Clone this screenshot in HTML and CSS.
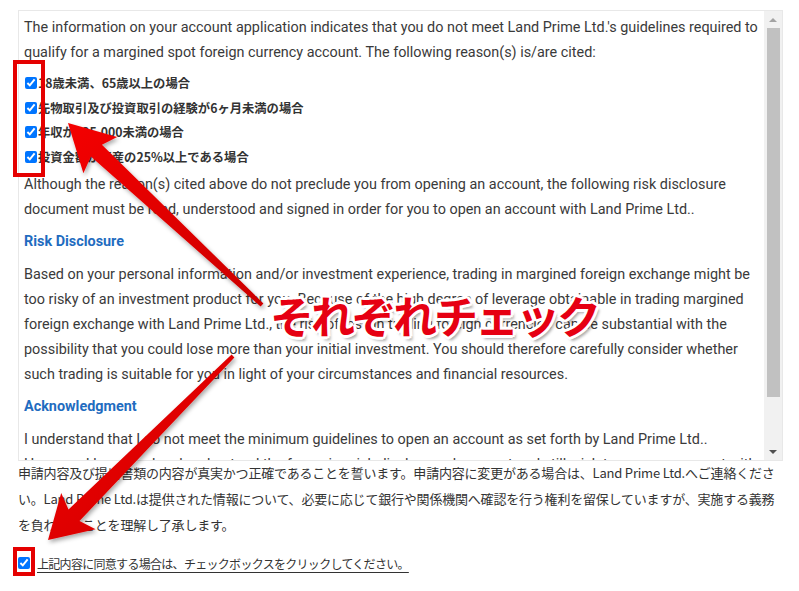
FILE: index.html
```html
<!DOCTYPE html>
<html lang="ja">
<head>
<meta charset="utf-8">
<title>Risk Disclosure</title>
<link rel="stylesheet" href="styles.css">
</head>
<body>
<div class="box">
  <div class="content">
    <p class="para">The information on your account application indicates that you do not meet Land Prime Ltd.'s guidelines required to qualify for a margined spot foreign currency account. The following reason(s) is/are cited:</p>
    <ul class="reasons">
      <li><input type="checkbox" checked><span>18歳未満、65歳以上の場合</span></li>
      <li><input type="checkbox" checked><span>先物取引及び投資取引の経験が6ヶ月未満の場合</span></li>
      <li><input type="checkbox" checked><span>年収が$25,000未満の場合</span></li>
      <li><input type="checkbox" checked><span>投資金額が資産の25%以上である場合</span></li>
    </ul>
    <p class="para tight">Although the reason(s) cited above do not preclude you from opening an account, the following risk disclosure document must be read, understood and signed in order for you to open an account with Land Prime Ltd..</p>
    <h3 class="head">Risk Disclosure</h3>
    <p class="para">Based on your personal information and/or investment experience, trading in margined foreign exchange might be too risky of an investment product for you. Because of the high degree of leverage obtainable in trading margined foreign exchange with Land Prime Ltd., the risk of loss in trading foreign currencies can be substantial with the possibility that you could lose more than your initial investment. You should therefore carefully consider whether such trading is suitable for you in light of your circumstances and financial resources.</p>
    <h3 class="head">Acknowledgment</h3>
    <p class="para">I understand that I do not meet the minimum guidelines to open an account as set forth by Land Prime Ltd.. However, I have read and understood the foregoing risk disclosure document and still wish to open an account with Land Prime Ltd..</p>
  </div>
  <div class="scrollbar">
    <div class="sb-btn"><span class="tri up"></span></div>
    <div class="sb-thumb"></div>
    <div class="sb-space"></div>
    <div class="sb-btn"><span class="tri down"></span></div>
  </div>
</div>
<p class="notice">申請内容及び提出書類の内容が真実かつ正確であることを誓います。申請内容に変更がある場合は、Land Prime Ltd.へご連絡ください。Land Prime Ltd.は提供された情報について、必要に応じて銀行や関係機関へ確認を行う権利を留保していますが、実施する義務を負わないことを理解し了承します。</p>
<label class="agree"><input type="checkbox" checked><span>上記内容に同意する場合は、チェックボックスをクリックしてください。</span></label>

<div class="annot">
  <div class="frame frame-list"></div>
  <div class="frame frame-agree"></div>
  <svg class="arrows" width="799" height="591" viewBox="0 0 799 591">
    <defs>
      <linearGradient id="rg" x1="0" y1="0" x2="1" y2="1">
        <stop offset="0" stop-color="#f40000"/>
        <stop offset="1" stop-color="#cc0000"/>
      </linearGradient>
      <filter id="sh" x="-20%" y="-20%" width="140%" height="140%">
        <feDropShadow dx="1.5" dy="2.5" stdDeviation="2" flood-color="#000" flood-opacity="0.35"/>
      </filter>
    </defs>
    <path filter="url(#sh)" fill="url(#rg)" d="M68,123 L117.2,137.1 L101.9,144.7 L263.4,303.5 L260.6,306.5 L90.9,156.5 L83.4,173.3 Z"/>
    <path filter="url(#sh)" fill="url(#rg)" d="M48,540 L95.6,529.2 L79.5,521 L234.4,357.4 L231.6,354.6 L68.5,509.4 L61.2,493 Z"/>
  </svg>
  <div class="callout">それぞれチェック</div>
</div>
</body>
</html>
```
FILE: styles.css
```css
html, body {
  margin: 0;
  padding: 0;
  background: #fff;
}
body {
  padding: 10px 16px 0 18px;
  font-family: Roboto, "Noto Sans CJK JP", sans-serif;
  color: #3a3a3a;
  position: relative;
  width: 799px;
  height: 591px;
  box-sizing: border-box;
  overflow: hidden;
}
.box {
  display: flex;
  width: 765px;
  height: 451px;
  border: 1px solid #e8e8e8;
  box-sizing: border-box;
}
.content {
  flex: 1;
  overflow: hidden;
  padding: 4px 6px 0 5px;
}
.para {
  margin: 0;
  font-size: 14.4px;
  line-height: 25px;
}
.reasons {
  list-style: none;
  margin: 6px 0 0;
  padding: 0;
}
.reasons li {
  display: flex;
  align-items: center;
  height: 24.5px;
  font-family: "Noto Sans CJK JP", sans-serif;
  font-weight: 700;
  font-size: 12.3px;
  color: #333;
}
.reasons input {
  width: 12px;
  height: 12px;
  margin: 0 1px 0 1px;
}
.tight {
  margin-top: 3px;
}
.head {
  margin: 10px 0;
  font-size: 14.4px;
  line-height: 20px;
  font-weight: 700;
  color: #1f6cc0;
}
.scrollbar {
  width: 18px;
  background: #f1f1f1;
  display: flex;
  flex-direction: column;
  align-items: center;
}
.sb-btn {
  height: 17px;
  width: 100%;
  display: flex;
  align-items: center;
  justify-content: center;
}
.tri {
  width: 0;
  height: 0;
  border-left: 4px solid transparent;
  border-right: 4px solid transparent;
}
.tri.up {
  border-bottom: 4px solid #a3a3a3;
}
.tri.down {
  border-top: 4px solid #505050;
}
.sb-thumb {
  width: 13px;
  height: 369px;
  background: #c1c1c1;
}
.sb-space {
  flex: 1;
}
.notice {
  margin: -1px 0 0;
  font-family: "Noto Sans CJK JP", sans-serif;
  font-size: 13px;
  letter-spacing: -0.2px;
  line-height: 26px;
  color: #333;
  width: 765px;
}
.agree {
  display: flex;
  align-items: center;
  margin-top: 15px;
  height: 20px;
  font-family: "Noto Sans CJK JP", sans-serif;
  font-size: 12px;
  letter-spacing: -0.7px;
  color: #333;
}
.agree input {
  width: 12px;
  height: 12px;
  margin: 0 7px 0 0;
}
.agree span {
  text-decoration: underline;
  text-underline-offset: 3px;
}
.annot {
  position: absolute;
  left: 0;
  top: 0;
  width: 799px;
  height: 591px;
  pointer-events: none;
}
.frame {
  position: absolute;
  border: 4px solid #e50000;
  box-sizing: border-box;
}
.frame-list {
  left: 13px;
  top: 60px;
  width: 32px;
  height: 117px;
}
.frame-agree {
  left: 13px;
  top: 547px;
  width: 22px;
  height: 29px;
}
.arrows {
  position: absolute;
  left: 0;
  top: 0;
}
.callout {
  position: absolute;
  left: 270px;
  top: 290px;
  font-family: "Noto Sans CJK JP", sans-serif;
  font-weight: 700;
  font-size: 44px;
  line-height: 50px;
  letter-spacing: -3px;
  color: #e60012;
  white-space: nowrap;
  text-shadow:
    3px 0 0 #fff, -3px 0 0 #fff, 0 3px 0 #fff, 0 -3px 0 #fff,
    2px 2px 0 #fff, -2px 2px 0 #fff, 2px -2px 0 #fff, -2px -2px 0 #fff,
    3px 4px 3px rgba(0,0,0,0.35);
}
```
